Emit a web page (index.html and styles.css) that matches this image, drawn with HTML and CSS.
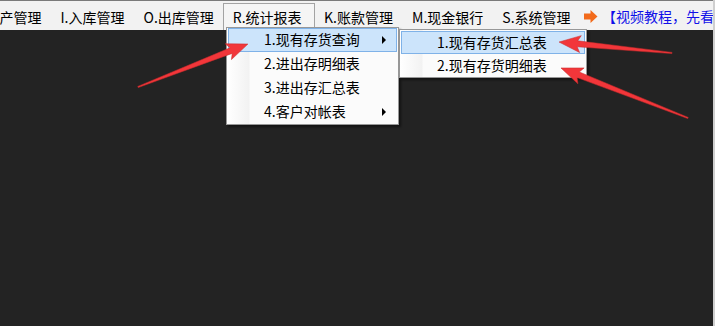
FILE: index.html
```html
<!DOCTYPE html>
<html>
  <head>
    <meta charset="utf-8">
    <title>统计报表</title>
    <link rel="stylesheet" href="styles.css">
  </head>
  <body>
    <div class="app">
      <nav class="menubar">
        <span class="menubar__item menubar__item--first">产管理</span>
        <span class="menubar__item">I.入库管理</span>
        <span class="menubar__item">O.出库管理</span>
        <span class="menubar__item is-open">R.统计报表</span>
        <span class="menubar__item">K.账款管理</span>
        <span class="menubar__item">M.现金银行</span>
        <span class="menubar__item">S.系统管理</span>
        <span class="menubar__tip">
          <svg class="menubar__icon" width="14" height="13" viewBox="0 0 14 13">
            <polygon points="0,3.5 6.5,3.5 6.5,0 13.5,6.5 6.5,13 6.5,9.5 0,9.5" fill="#f26a1b"/>
          </svg>
          <span class="menubar__link">【视频教程，先看</span>
        </span>
      </nav>

      <main class="workspace"></main>

      <ul class="menu menu--report">
        <li class="menu__item is-active has-sub">
          1.现有存货查询
          <ul class="menu menu--sub">
            <li class="menu__item is-active">1.现有存货汇总表</li>
            <li class="menu__item">2.现有存货明细表</li>
          </ul>
        </li>
        <li class="menu__item">2.进出存明细表</li>
        <li class="menu__item">3.进出存汇总表</li>
        <li class="menu__item has-sub">4.客户对帐表</li>
      </ul>

      <!-- red callout arrows drawn over the screenshot -->
      <svg class="callouts" width="715" height="326" viewBox="0 0 715 326">
        <g transform="translate(138 87) rotate(-21.35)">
          <polygon class="callout" points="0,-0.6 100,-3 97,-8.5 118,0 97,8.5 100,3 0,0.6"/>
        </g>
        <g transform="translate(672 53) rotate(-174.44)">
          <polygon class="callout" points="0,-0.6 95,-3 92,-8.5 113.5,0 92,8.5 95,3 0,0.6"/>
        </g>
        <g transform="translate(688 118) rotate(-158.51)">
          <polygon class="callout" points="0,-0.6 118,-3 115,-8.5 136.5,0 115,8.5 118,3 0,0.6"/>
        </g>
      </svg>
    </div>
  </body>
</html>
```

FILE: styles.css
```css
/* Base */
* {
  box-sizing: border-box;
}

html,
body {
  height: 100%;
  margin: 0;
}

body {
  background: #232323;
  color: #000;
  font-family: "Noto Sans CJK SC", "Microsoft YaHei", sans-serif;
  font-size: 14px;
  overflow: hidden;
}

/* Modules */
.app {
  border-right: 2px solid #cfcfcf;
  display: flex;
  flex-direction: column;
  height: 326px;
  position: relative;
  width: 715px;
}

.menubar {
  align-items: stretch;
  background: #f2f2f2;
  border-top: 1px solid #7a7a7a;
  display: flex;
  flex: none;
  height: 30px;
  overflow: hidden;
  white-space: nowrap;
}

.menubar__item {
  align-items: center;
  border: 1px solid transparent;
  border-bottom: 0;
  display: flex;
  line-height: 20px;
  margin-top: 2px;
  padding: 0 8.5px 1px;
}
.menubar__item--first {
  margin-left: -10px;
}
.menubar__item.is-open {
  background: #f5f5f5;
  border-color: #a3a3a3;
  padding-right: 12px;
}

.menubar__tip {
  align-items: center;
  display: flex;
  margin-left: 4px;
  padding-top: 1px;
}

.menubar__icon {
  display: block;
  margin-right: 4px;
}

.menubar__link {
  color: #1010e8;
}

.workspace {
  background: #232323;
  flex: 1;
}

.menu {
  background: #fbfbfb linear-gradient(to right, #fff 0, #f2f2f2 22px, #fbfbfb 23px, #fbfbfb 100%);
  border: 1px solid #979797;
  box-shadow: 2px 2px 2px rgba(0, 0, 0, 0.45);
  list-style: none;
  margin: 0;
  padding: 0;
  position: absolute;
}

.menu--report {
  left: 226px;
  top: 27px;
  width: 173px;
}

.menu--sub {
  left: 170px;
  top: 0;
  width: 188px;
}

.menu__item {
  border: 1px solid transparent;
  height: 24px;
  line-height: 21px;
  margin: 0 1px;
  padding-left: 35px;
  position: relative;
  white-space: nowrap;
}
.menu__item.is-active {
  background: #cce4fb;
  border-color: #7fb2e8;
}
.menu--sub .menu__item {
  margin-top: 1px;
  height: 23px;
  padding-left: 35px;
}
.menu--sub .menu__item + .menu__item {
  margin-top: 0;
}

.has-sub::after {
  border-bottom: 4px solid transparent;
  border-left: 4px solid #000;
  border-top: 4px solid transparent;
  content: "";
  position: absolute;
  right: 10px;
  top: 7px;
}
.has-sub .menu__item::after {
  content: none;
}

.callouts {
  left: 0;
  pointer-events: none;
  position: absolute;
  top: 0;
}

.callout {
  fill: #f2363a;
  stroke: #c92b2b;
  stroke-width: 0.5;
}
```
